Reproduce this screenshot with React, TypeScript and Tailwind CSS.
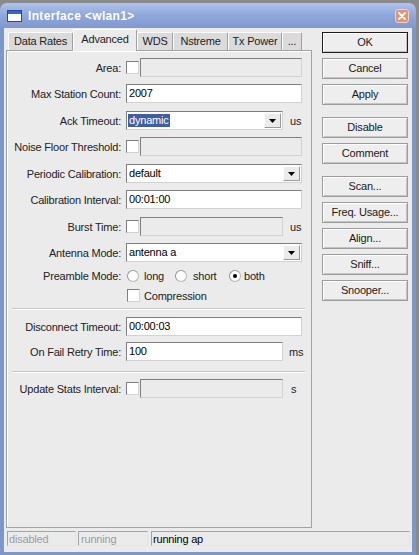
import React from "react";

const sunken =
  "border border-t-[#7f7f7f] border-l-[#7f7f7f] border-r-[#d2d2d2] border-b-[#d2d2d2]";

function Field({ w, value, disabled }: { w: string; value?: string; disabled?: boolean }) {
  return (
    <div
      className={`${w} h-[19px] ${sunken} ${disabled ? "bg-[#ecebec]" : "bg-white"} pl-[2px] leading-[17px] text-black`}
    >
      {value}
    </div>
  );
}

function Check() {
  return <div className={`w-[13px] h-[13px] ${sunken} bg-white shrink-0`} />;
}

function Arrow() {
  return (
    <div className="mr-[1px] w-[17px] h-[15px] bg-[#ecebec] border border-t-white border-l-white border-r-[#9a9a9a] border-b-[#9a9a9a] flex items-center justify-center">
      <svg width="7" height="4" viewBox="0 0 7 4">
        <polygon points="0,0 7,0 3.5,4" fill="#000" />
      </svg>
    </div>
  );
}

function Select({ w, value, highlight }: { w: string; value: string; highlight?: boolean }) {
  return (
    <div className={`${w} h-[19px] ${sunken} bg-white flex items-center justify-between text-black`}>
      {highlight ? (
        <span className="ml-[1px] bg-[#3f5ea3] text-white px-[1px] h-[13px] leading-[13px]">{value}</span>
      ) : (
        <span className="ml-[2px] leading-[17px]">{value}</span>
      )}
      <Arrow />
    </div>
  );
}

function Row({ h, label, children }: { h: string; label: string; children: React.ReactNode }) {
  return (
    <div className={`flex ${h} pt-[4px]`}>
      <div className="w-[114px] h-[19px] pt-[1px] leading-[19px] text-right whitespace-nowrap">{label}</div>
      <div className="ml-[5px] flex items-center h-[19px]">{children}</div>
    </div>
  );
}

function Unit({ t, ml }: { t: string; ml: string }) {
  return <span className={`${ml} pt-[1px]`}>{t}</span>;
}

function Radio({ on }: { on?: boolean }) {
  return (
    <div className="w-[12px] h-[12px] rounded-full border border-[#b4b4b4] border-t-[#959595] border-l-[#959595] bg-white flex items-center justify-center shrink-0">
      {on && <div className="w-[4px] h-[4px] rounded-full bg-black" />}
    </div>
  );
}

function Sep({ mt }: { mt: string }) {
  return <div className={`${mt} ml-[5px] w-[293px] h-[2px] border-t border-t-[#c6c6c6] border-b border-b-white`} />;
}

function Tab({ label, w, active }: { label: string; w: string; active?: boolean }) {
  return active ? (
    <div
      className={`${w} h-[22px] -mb-[1px] relative z-10 bg-[#ecebec] border-t border-l border-r border-t-white border-l-white border-r-[#a0a0a0] rounded-t-[2px] flex items-center justify-center pb-[3px]`}
    >
      {label}
    </div>
  ) : (
    <div
      className={`${w} h-[18px] bg-[#dcdbdc] border-t border-l border-r border-t-white border-l-white border-r-[#a0a0a0] rounded-t-[2px] flex items-center justify-center`}
    >
      {label}
    </div>
  );
}

function Btn({ label, mt, def }: { label: string; mt: string; def?: boolean }) {
  return (
    <div
      className={`${mt} h-[21px] w-[86px] ${
        def ? "border border-[#1e1e1e]" : "border border-[#9c9c9c]"
      } bg-[#efeeef] shadow-[inset_1px_1px_0_#ffffff,inset_-1px_-1px_0_#c4c4c4] flex items-center justify-center text-[#1a1a1a]`}
    >
      {label}
    </div>
  );
}

export default function App() {
  return (
    <div className="w-[419px] h-[555px] bg-[#8a8a8a] pt-[3px] overflow-hidden font-['Liberation_Sans',Arial,sans-serif] text-[11px] tracking-[-0.2px] text-[#222222]">
      <div className="w-[416px] h-[552px] flex flex-col rounded-t-[7px] bg-[#7f97c7] overflow-hidden">
        {/* title bar */}
        <div className="h-[25px] flex items-center bg-linear-to-b from-[#b0c3ec] via-[#8ea6da] to-[#8199cf] pl-[7px]">
          <svg width="15" height="12" viewBox="0 0 15 12">
            <rect x="0.5" y="0.5" width="14" height="11" fill="#ffffff" stroke="#2a4a94" />
            <rect x="1" y="1" width="13" height="3" fill="#3a66c6" />
          </svg>
          <span className="ml-[6px] text-white font-bold text-[12px] tracking-[0.35px]">Interface &lt;wlan1&gt;</span>
          <div className="ml-auto mr-[7px] w-[14px] h-[14px] rounded-[3px] bg-[#de9479] border border-[#f0d2c6] flex items-center justify-center">
            <svg width="8" height="8" viewBox="0 0 8 8">
              <path d="M1 1 L7 7 M7 1 L1 7" stroke="#ffffff" strokeWidth="1.8" strokeLinecap="round" />
            </svg>
          </div>
        </div>

        {/* body */}
        <div className="mx-[4px] mb-[3px] flex-1 bg-[#ecebec] flex flex-col">
          <div className="flex">
            <div className="ml-[2px] flex flex-col">
              <div className="h-[22px] flex items-end pl-[2px]">
                <Tab label="Data Rates" w="w-[65px]" />
                <Tab label="Advanced" w="w-[64px]" active />
                <Tab label="WDS" w="w-[36px]" />
                <Tab label="Nstreme" w="w-[55px]" />
                <Tab label="Tx Power" w="w-[54px]" />
                <Tab label="..." w="w-[20px]" />
              </div>
              <div className="w-[306px] h-[478px] border border-[#a3a3a3] shadow-[inset_1px_1px_0_#ffffff] flex flex-col pt-[3px]">
                <Row h="h-[26px]" label="Area:">
                  <Check />
                  <div className="ml-[1px]">
                    <Field w="w-[162px]" disabled />
                  </div>
                </Row>
                <Row h="h-[27px]" label="Max Station Count:">
                  <Field w="w-[176px]" value="2007" />
                </Row>
                <Row h="h-[26px]" label="Ack Timeout:">
                  <Select w="w-[157px]" value="dynamic" highlight />
                  <Unit t="us" ml="ml-[7px]" />
                </Row>
                <Row h="h-[27px]" label="Noise Floor Threshold:">
                  <Check />
                  <div className="ml-[1px]">
                    <Field w="w-[162px]" disabled />
                  </div>
                </Row>
                <Row h="h-[26px]" label="Periodic Calibration:">
                  <Select w="w-[176px]" value="default" />
                </Row>
                <Row h="h-[27px]" label="Calibration Interval:">
                  <Field w="w-[176px]" value="00:01:00" />
                </Row>
                <Row h="h-[26px]" label="Burst Time:">
                  <Check />
                  <div className="ml-[1px]">
                    <Field w="w-[143px]" disabled />
                  </div>
                  <Unit t="us" ml="ml-[7px]" />
                </Row>
                <Row h="h-[26px]" label="Antenna Mode:">
                  <Select w="w-[176px]" value="antenna a" />
                </Row>
                <div className="flex h-[21px] items-center">
                  <div className="w-[114px] text-right pt-[1px]">Preamble Mode:</div>
                  <div className="ml-[6px] flex items-center">
                    <div className="w-[48px] flex items-center">
                      <Radio />
                      <span className="ml-[5px] pt-[1px]">long</span>
                    </div>
                    <div className="w-[54px] flex items-center">
                      <Radio />
                      <span className="ml-[6px] pt-[1px]">short</span>
                    </div>
                    <div className="flex items-center">
                      <Radio on />
                      <span className="ml-[3px] pt-[1px]">both</span>
                    </div>
                  </div>
                </div>
                <div className="flex h-[19px] items-center">
                  <div className="ml-[120px]">
                    <Check />
                  </div>
                  <span className="ml-[4px] pt-[1px]">Compression</span>
                </div>
                <Sep mt="mt-[3px]" />
                <div className="mt-[3px]">
                  <Row h="h-[25px]" label="Disconnect Timeout:">
                    <Field w="w-[176px]" value="00:00:03" />
                  </Row>
                  <Row h="h-[26px]" label="On Fail Retry Time:">
                    <Field w="w-[157px]" value="100" />
                    <Unit t="ms" ml="ml-[6px]" />
                  </Row>
                </div>
                <Sep mt="mt-[7px]" />
                <div className="mt-[2px]">
                  <Row h="h-[26px]" label="Update Stats Interval:">
                    <Check />
                    <div className="ml-[1px]">
                      <Field w="w-[143px]" disabled />
                    </div>
                    <Unit t="s" ml="ml-[8px]" />
                  </Row>
                </div>
              </div>
            </div>

            <div className="ml-[10px] pt-[4px] flex flex-col">
              <Btn label="OK" mt="mt-0" def />
              <Btn label="Cancel" mt="mt-[5px]" />
              <Btn label="Apply" mt="mt-[5px]" />
              <Btn label="Disable" mt="mt-[12px]" />
              <Btn label="Comment" mt="mt-[5px]" />
              <Btn label="Scan..." mt="mt-[12px]" />
              <Btn label="Freq. Usage..." mt="mt-[5px]" />
              <Btn label="Align..." mt="mt-[5px]" />
              <Btn label="Sniff..." mt="mt-[5px]" />
              <Btn label="Snooper..." mt="mt-[5px]" />
            </div>
          </div>

          {/* status bar */}
          <div className="mt-[3px] h-[15px] flex">
            <div className="ml-[3px] w-[69px] h-[15px] border border-t-[#a3a3a3] border-l-[#a3a3a3] border-r-[#e4e4e4] border-b-[#e4e4e4] pl-[1px] leading-[14px] text-[#9c9c9c]">
              disabled
            </div>
            <div className="ml-[2px] w-[70px] h-[15px] border border-t-[#a3a3a3] border-l-[#a3a3a3] border-r-[#e4e4e4] border-b-[#e4e4e4] pl-[2px] leading-[14px] text-[#9c9c9c]">
              running
            </div>
            <div className="ml-[3px] w-[259px] h-[15px] border border-t-[#a3a3a3] border-l-[#a3a3a3] border-r-[#e4e4e4] border-b-[#e4e4e4] pl-[1px] leading-[14px] text-black">
              running ap
            </div>
          </div>
        </div>
      </div>
    </div>
  );
}
